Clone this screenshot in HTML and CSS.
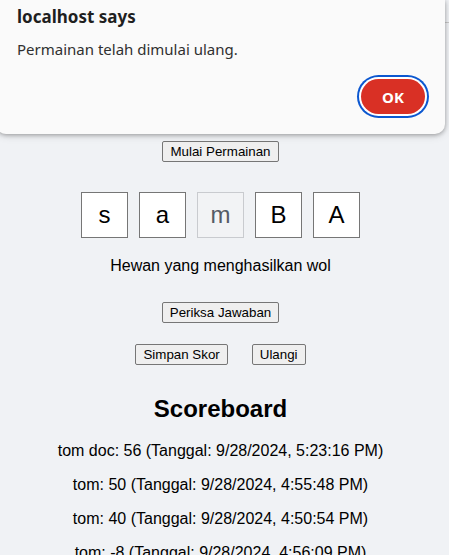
FILE: index.html
```html
<!DOCTYPE html>
<html lang="id">
<head>
<meta charset="utf-8">
<title>Tebak Kata</title>
<link rel="stylesheet" href="styles.css">
</head>
<body>
<div class="topbar"></div>
<main class="game">
  <button class="btn">Mulai Permainan</button>
  <div class="letters">
    <div class="tile">s</div>
    <div class="tile">a</div>
    <div class="tile tile-used">m</div>
    <div class="tile">B</div>
    <div class="tile">A</div>
  </div>
  <p class="hint">Hewan yang menghasilkan wol</p>
  <button class="btn btn-check">Periksa Jawaban</button>
  <div class="actions">
    <button class="btn">Simpan Skor</button>
    <button class="btn">Ulangi</button>
  </div>
  <h2 class="title">Scoreboard</h2>
  <div class="scores">
    <p class="score">tom doc: 56 (Tanggal: 9/28/2024, 5:23:16 PM)</p>
    <p class="score">tom: 50 (Tanggal: 9/28/2024, 4:55:48 PM)</p>
    <p class="score">tom: 40 (Tanggal: 9/28/2024, 4:50:54 PM)</p>
    <p class="score">tom: -8 (Tanggal: 9/28/2024, 4:56:09 PM)</p>
  </div>
</main>
<div class="dialog">
  <div class="dialog-title">localhost says</div>
  <div class="dialog-msg">Permainan telah dimulai ulang.</div>
  <div class="dialog-actions">
    <button class="ok">OK</button>
  </div>
</div>
</body>
</html>
```
FILE: styles.css
```css
html, body {
  margin: 0;
  padding: 0;
  background: #f0f2f5;
  overflow: hidden;
  height: 555px;
}
body {
  font-family: "Liberation Sans", Arial, sans-serif;
  color: #000;
  position: relative;
}
.topbar {
  height: 22px;
  border-bottom: 1px solid #c8c8c8;
}
.game {
  display: flex;
  flex-direction: column;
  align-items: center;
  margin-right: 8px;
  padding-top: 118px;
}
.btn {
  font-family: "Liberation Sans", Arial, sans-serif;
  font-size: 13.333px;
  line-height: 15px;
  padding: 2px 7px;
  margin: 0;
  background: #efefef;
  border: 1px solid #767676;
  border-radius: 2px;
  color: #000;
}
.letters {
  display: flex;
  gap: 11px;
  margin-top: 30px;
}
.tile {
  width: 45px;
  height: 44px;
  border: 1px solid #767676;
  background: #fff;
  display: flex;
  align-items: center;
  justify-content: center;
  font-size: 24px;
}
.tile-used {
  background: #f2f3f5;
  border-color: #c9cbcf;
  color: #555b66;
}
.hint {
  margin: 19px 0 0;
  font-size: 16px;
  line-height: 18px;
}
.btn-check {
  margin-top: 27px;
}
.actions {
  display: flex;
  gap: 24px;
  margin-top: 21px;
}
.title {
  margin: 30px 0 0;
  font-size: 24px;
  line-height: 28px;
  font-weight: bold;
}
.scores {
  display: flex;
  flex-direction: column;
  align-items: center;
  gap: 16px;
  margin-top: 19px;
}
.score {
  margin: 0;
  font-size: 16px;
  line-height: 18px;
}
.dialog {
  position: absolute;
  top: 0;
  left: -4px;
  width: 449px;
  height: 134px;
  box-sizing: border-box;
  background: #fafafa;
  border-radius: 0 0 10px 10px;
  box-shadow: 0 1px 4px rgba(0, 0, 0, 0.3), 0 2px 8px rgba(0, 0, 0, 0.12);
  font-family: "Noto Sans", "Open Sans", sans-serif;
  color: #1f1f1f;
  padding: 5px 20px 0 21px;
}
.dialog-title {
  font-size: 17px;
  font-weight: bold;
  line-height: 24px;
}
.dialog-msg {
  font-size: 15px;
  line-height: 20px;
  margin-top: 10px;
  color: #303030;
}
.dialog-actions {
  display: flex;
  justify-content: flex-end;
  margin-top: 20px;
}
.ok {
  width: 64px;
  height: 35px;
  border: none;
  border-radius: 18px;
  background: #d93025;
  color: #fff;
  font-family: "Noto Sans", "Open Sans", sans-serif;
  font-size: 15px;
  font-weight: bold;
  box-shadow: 0 0 0 2px #fff, 0 0 0 4px #0b57d0;
}
```
